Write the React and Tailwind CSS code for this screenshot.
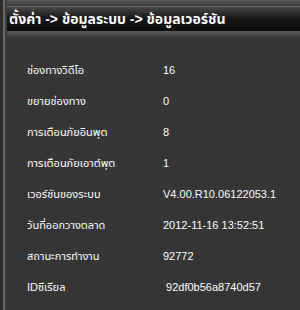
import React from "react";

const rows = [
  { label: "ช่องทางวิดีโอ", value: "16" },
  { label: "ขยายช่องทาง", value: "0" },
  { label: "การเตือนภัยอินพุต", value: "8" },
  { label: "การเตือนภัยเอาต์พุต", value: "1" },
  { label: "เวอร์ชันของระบบ", value: "V4.00.R10.06122053.1" },
  { label: "วันที่ออกวางตลาด", value: "2012-11-16 13:52:51" },
  { label: "สถานะการทำงาน", value: "92772" },
  { label: "IDซีเรียล", value: " 92df0b56a8740d57" },
];

export default function App() {
  return (
    <div className="w-[300px] h-[310px] overflow-hidden flex bg-[#353535] font-['Liberation_Sans','Noto_Sans','Noto_Sans_Thai',sans-serif] text-white">
      {/* left frame */}
      <div className="flex h-full shrink-0">
        <div className="w-[3px] bg-[#2c2c2c]" />
        <div className="w-[2px] bg-[#686868]" />
        <div className="w-[2px] bg-[#3c3c3c]" />
      </div>

      <div className="flex-1 flex flex-col">
        <div className="h-[6px] bg-gradient-to-b from-[#5e5e5e] to-[#3a3a3a]" />
        <div className="h-[25px] flex items-center pl-[2px] bg-gradient-to-b from-[#4a4a4a] via-[#151515] to-[#0c0c0c] border-t border-[#6a6a6a]">
          <span className="text-[14px] font-bold leading-none whitespace-nowrap">
            ตั้งค่า -&gt; ข้อมูลระบบ -&gt; ข้อมูลเวอร์ชัน
          </span>
        </div>
        <div className="h-[6px] bg-gradient-to-b from-[#5a5a5a] to-[#3c3c3c]" />

        <div className="flex flex-col pt-[18px]">
          {rows.map((r) => (
            <div key={r.label} className="h-[31px] flex items-center text-[11px]">
              <span className="w-[156px] pl-[20px] whitespace-nowrap">{r.label}</span>
              <span className="whitespace-pre">{r.value}</span>
            </div>
          ))}
        </div>
      </div>
    </div>
  );
}
